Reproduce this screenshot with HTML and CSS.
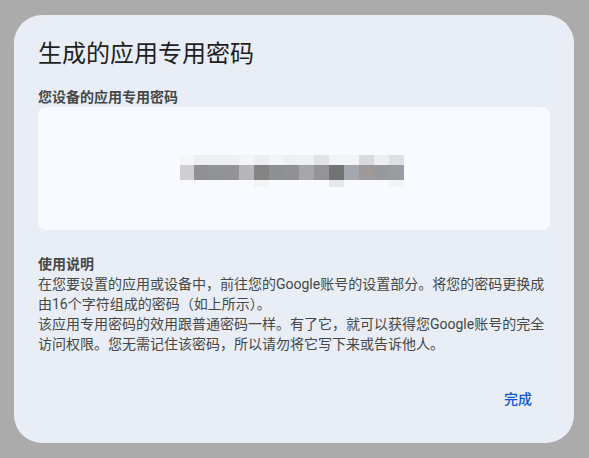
FILE: index.html
```html
<!DOCTYPE html>
<html lang="zh-CN">
<head>
<meta charset="utf-8">
<title>生成的应用专用密码</title>
<link rel="stylesheet" href="styles.css">
</head>
<body>
<div class="dialog">
  <h1 class="title">生成的应用专用密码</h1>
  <div class="label">您设备的应用专用密码</div>
  <div class="pw-box">
    <div class="pixels" aria-label="密码已隐藏">
      <div class="prow top"><i></i><i></i><i></i><i></i><i></i><i></i><i></i><i></i><i></i><i></i><i></i><i></i><i></i><i></i><i></i></div>
      <div class="prow mid"><i></i><i></i><i></i><i></i><i></i><i></i><i></i><i></i><i></i><i></i><i></i><i></i><i></i><i></i><i></i></div>
      <div class="prow bot"><i></i><i></i><i></i><i></i><i></i><i></i><i></i><i></i><i></i><i></i><i></i><i></i><i></i><i></i><i></i></div>
    </div>
  </div>
  <div class="info">
    <div class="info-title">使用说明</div>
    <p class="info-text">在您要设置的应用或设备中，前往您的Google账号的设置部分。将您的密码更换成由16个字符组成的密码（如上所示）。</p>
    <p class="info-text">该应用专用密码的效用跟普通密码一样。有了它，就可以获得您Google账号的完全访问权限。您无需记住该密码，所以请勿将它写下来或告诉他人。</p>
  </div>
  <div class="actions">
    <button class="done" type="button">完成</button>
  </div>
</div>
</body>
</html>
```

FILE: styles.css
```css
html, body {
  margin: 0;
  padding: 0;
}
body {
  background: #ababab;
  padding: 15px 14px;
  font-family: "Roboto", "Noto Sans CJK SC", sans-serif;
  height: 458px;
  box-sizing: border-box;
  overflow: hidden;
}
.dialog {
  box-sizing: border-box;
  width: 560px;
  height: 428px;
  background: #e9eef6;
  border-radius: 28px;
  padding: 24px 24px 24px 24px;
  display: flex;
  flex-direction: column;
}
.title {
  margin: 0;
  font-size: 24px;
  line-height: 30px;
  font-weight: 400;
  color: #1f1f1f;
}
.label {
  margin-top: 18px;
  font-size: 14px;
  line-height: 20px;
  font-weight: 700;
  color: #444746;
}
.pw-box {
  box-sizing: border-box;
  height: 123px;
  background: #f8faff;
  border-radius: 8px;
  padding: 48px 0 0 142px;
}
.pixels {
  display: flex;
  flex-direction: column;
}
.prow {
  display: flex;
}
.prow i {
  display: block;
  width: 15px;
}
.prow i:first-child { width: 14px; }
.prow.top i { height: 10px; }
.prow.mid i { height: 15px; }
.prow.bot i { height: 7px; }

.prow.top i:nth-child(1) { background: #f5f6f9; }
.prow.top i:nth-child(2) { background: #eeeff2; }
.prow.top i:nth-child(3) { background: #eeeff2; }
.prow.top i:nth-child(4) { background: #eeeff2; }
.prow.top i:nth-child(5) { background: #f3f4f7; }
.prow.top i:nth-child(6) { background: #eceef1; }
.prow.top i:nth-child(7) { background: #f3f4f7; }
.prow.top i:nth-child(8) { background: #eeeff2; }
.prow.top i:nth-child(9) { background: #eef2f5; }
.prow.top i:nth-child(10) { background: #e1e2e6; }
.prow.top i:nth-child(11) { background: #f2f3f6; }
.prow.top i:nth-child(12) { background: #f3f4f6; }
.prow.top i:nth-child(13) { background: #d8d9dc; }
.prow.top i:nth-child(14) { background: #eceef2; }
.prow.top i:nth-child(15) { background: #dde1e5; }

.prow.mid i:nth-child(1) { background: #cfcfd1; }
.prow.mid i:nth-child(2) { background: #919194; }
.prow.mid i:nth-child(3) { background: #8f9396; }
.prow.mid i:nth-child(4) { background: #939395; }
.prow.mid i:nth-child(5) { background: #b5b7ba; }
.prow.mid i:nth-child(6) { background: #858384; }
.prow.mid i:nth-child(7) { background: #8e8f93; }
.prow.mid i:nth-child(8) { background: #909194; }
.prow.mid i:nth-child(9) { background: #a7a6aa; }
.prow.mid i:nth-child(10) { background: #939498; }
.prow.mid i:nth-child(11) { background: #727272; }
.prow.mid i:nth-child(12) { background: #a4a7ab; }
.prow.mid i:nth-child(13) { background: #9e9a9a; }
.prow.mid i:nth-child(14) { background: #979a9d; }
.prow.mid i:nth-child(15) { background: #989da2; }

.prow.bot i:nth-child(6) { background: #f2f3f5; }
.prow.bot i:nth-child(11) { background: #e6e7ea; }
.prow.bot i:nth-child(15) { background: #f2f3f6; }

.info {
  margin-top: 24px;
  font-size: 14px;
  line-height: 20px;
  color: #444746;
}
.info-title {
  font-weight: 700;
}
.info-text {
  margin: 0;
}
.actions {
  margin-top: auto;
  display: flex;
  justify-content: flex-end;
  padding-right: 6px;
}
.done {
  font-family: "Roboto", "Noto Sans CJK SC", sans-serif;
  font-size: 14px;
  line-height: 20px;
  font-weight: 500;
  color: #0b57d0;
  background: transparent;
  border: none;
  height: 40px;
  padding: 0 12px;
  border-radius: 20px;
  cursor: pointer;
}
```
